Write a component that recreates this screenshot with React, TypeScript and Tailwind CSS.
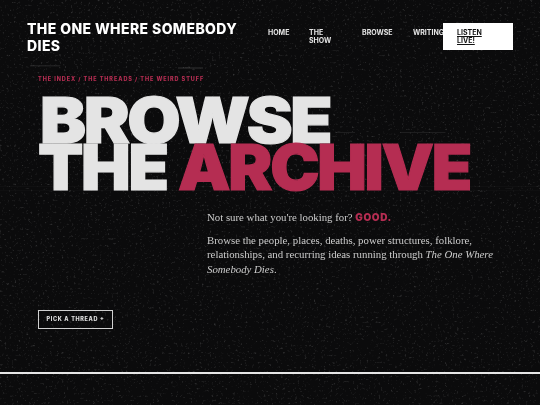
const display = { fontFamily: "Inter, 'Liberation Sans', sans-serif" };

function Grain() {
  return (
    <svg className="pointer-events-none absolute inset-0 h-full w-full" aria-hidden="true">
      <filter id="grain" x="0" y="0" width="100%" height="100%">
        <feTurbulence type="fractalNoise" baseFrequency="0.42" numOctaves="2" seed="7" />
        <feColorMatrix values="0 0 0 0 1  0 0 0 0 1  0 0 0 0 1  0 0 0 2.2 -1.36" />
        <feGaussianBlur stdDeviation="0.4" />
      </filter>
      <rect width="100%" height="100%" filter="url(#grain)" opacity="0.25" />
      {/* tape streaks */}
      <g fill="#fff" opacity="0.08">
        <rect x="30" y="65" width="30" height="1.5" />
        <rect x="178" y="67" width="25" height="2" />
        <rect x="335" y="132" width="20" height="1" />
        <rect x="400" y="132" width="45" height="1" />
        <rect x="0" y="186" width="540" height="1" opacity="0.3" />
        <rect x="0" y="190" width="540" height="1" opacity="0.25" />
      </g>
    </svg>
  );
}

export default function App() {
  return (
    <div className="relative h-[405px] w-[540px] overflow-hidden bg-[#0b0b0c]" style={display}>
      <Grain />
      <div className="relative">
        <header className="flex h-[69px] items-start pl-[27px] pt-[20px]">
          <a className="w-[225px] shrink-0 text-[14px] font-extrabold uppercase leading-[17px] tracking-[0.4px] text-white">
            The One Where Somebody Dies
          </a>
          <nav className="ml-[16px] flex items-start pt-[9px] text-[7px] font-bold uppercase leading-[8px] text-[#e6e6e6]">
            <a className="w-[41px]">Home</a>
            <a className="w-[53px]">The<br />Show</a>
            <a className="w-[51px]">Browse</a>
            <a className="w-[30px] whitespace-nowrap">Writing</a>
          </nav>
          <a className="mt-[3px] flex h-[27px] w-[70px] shrink-0 items-center bg-white pl-[14px] text-[7px] font-bold uppercase leading-[8px] text-[#111] underline">
            <span>Listen<br />Live!</span>
          </a>
        </header>

        <main className="pl-[38px]">
          <p className="mt-[7px] text-[5.5px] font-extrabold uppercase leading-[6px] tracking-[0.17em] text-[#b52d52]">
            The Index / The Threads / The Weird Stuff
          </p>
          <h1 className="mt-[15px] whitespace-nowrap text-[63px] font-black uppercase leading-[47px] tracking-[-0.035em] text-[#e4e4e4] [-webkit-text-stroke:1.2px_currentColor]">
            <span className="block origin-left translate-x-[2px] scale-x-[1.095]">Browse</span>
            <span className="block">
              <span className="inline-block origin-left scale-x-[1.05]">The</span>
              <span className="ml-[17px] inline-block origin-left scale-x-[1.05] text-[#b52d52]">Archive</span>
            </span>
          </h1>

          <div
            className="ml-[169px] mt-[19px] w-[295px] text-[10.8px] leading-[14.5px] text-[#cccccc]"
            style={{ fontFamily: "'Liberation Serif', serif" }}
          >
            <p>
              Not sure what you're looking for?{" "}
              <strong className="text-[10px] font-black tracking-[0.6px] text-[#b52d52]" style={display}>GOOD.</strong>
            </p>
            <p className="mt-[8px]">
              Browse the people, places, deaths, power structures, folklore, relationships, and recurring ideas running through <em>The One Where Somebody Dies</em>.
            </p>
          </div>

          <a className="mt-[34px] flex h-[19px] w-[75px] items-center justify-center border border-[#d0d0d0] text-[5.5px] font-extrabold uppercase tracking-[0.12em] text-[#e0e0e0]">
            Pick a thread +
          </a>
        </main>

        <div className="mt-[43px] h-[2px] bg-[#e6e6e6]" />
      </div>
    </div>
  );
}
